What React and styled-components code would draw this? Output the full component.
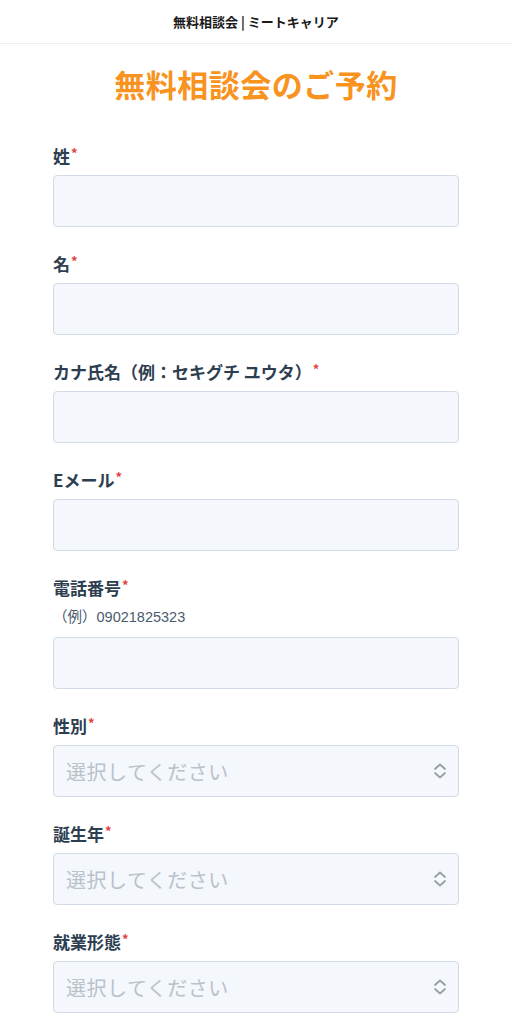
import React from "react"
import styled, { createGlobalStyle } from "styled-components"

const GlobalStyle = createGlobalStyle`
  * {
    box-sizing: border-box;
  }
  body {
    margin: 0;
    background: #ffffff;
    font-family: "Noto Sans CJK JP", "Noto Sans", sans-serif;
    color: #2d3e50;
  }
`

const Header = styled.header`
  height: 44px;
  display: flex;
  align-items: center;
  justify-content: center;
  border-bottom: 1px solid #eeeeee;
  font-size: 13px;
  font-weight: 700;
  color: #1a1a1a;
`

const Title = styled.h1`
  margin: 21px 0 0;
  text-align: center;
  font-size: 31px;
  line-height: 38px;
  font-weight: 700;
  color: #f7931e;
  letter-spacing: 0.5px;
`

const Form = styled.form`
  padding: 40px 53px 0;
  display: flex;
  flex-direction: column;
  gap: 24px;
`

const Field = styled.div`
  display: flex;
  flex-direction: column;
`

const Label = styled.label`
  font-size: 17px;
  line-height: 26px;
  font-weight: 700;
  color: #2d3e50;
  margin-bottom: 6px;
`

const Required = styled.span`
  color: #e53e3e;
  font-size: 13px;
  vertical-align: top;
  line-height: 20px;
  margin-left: 1px;
`

const Hint = styled.div`
  font-family: "Liberation Sans", "Noto Sans CJK JP", sans-serif;
  font-size: 14.5px;
  line-height: 20px;
  color: #4a5b6e;
  margin-bottom: 10px;
`

const Input = styled.input`
  width: 100%;
  height: 52px;
  border: 1px solid #d2dae3;
  border-radius: 4px;
  background: #f4f7fb;
  font-size: 18px;
  padding: 0 12px;
  outline: none;
`

const SelectBox = styled.div`
  height: 52px;
  border: 1px solid #d2dae3;
  border-radius: 4px;
  background: #f4f7fb;
  display: flex;
  align-items: center;
  justify-content: space-between;
  padding: 0 10px 0 12px;
`

const Placeholder = styled.span`
  font-size: 20px;
  color: #b9c1ca;
  letter-spacing: 0.5px;
`

const Chevrons = () => (
  <svg width="16" height="18" viewBox="0 0 16 18" fill="none" stroke="#9a9fa5" strokeWidth="1.8" strokeLinecap="round" strokeLinejoin="round">
    <polyline points="3,7 8,2.5 13,7" />
    <polyline points="3,11 8,15.5 13,11" />
  </svg>
)

const fields = [
  { label: "姓", type: "input" },
  { label: "名", type: "input" },
  { label: "カナ氏名（例：セキグチ ユウタ）", type: "input" },
  { label: "Eメール", type: "input" },
  { label: "電話番号", type: "input", hint: "（例）09021825323" },
  { label: "性別", type: "select" },
  { label: "誕生年", type: "select" },
  { label: "就業形態", type: "select" },
]

const App = () => {
  return (
    <>
      <GlobalStyle />
      <Header>無料相談会 | ミートキャリア</Header>
      <Title>無料相談会のご予約</Title>
      <Form>
        {fields.map(f => (
          <Field key={f.label}>
            <Label>
              {f.label}
              <Required>*</Required>
            </Label>
            {f.hint && <Hint>{f.hint}</Hint>}
            {f.type === "input" ? (
              <Input type="text" />
            ) : (
              <SelectBox>
                <Placeholder>選択してください</Placeholder>
                <Chevrons />
              </SelectBox>
            )}
          </Field>
        ))}
      </Form>
    </>
  )
}

export default App
